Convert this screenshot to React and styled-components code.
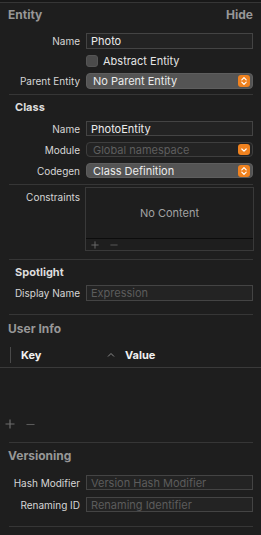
import React from "react";
import styled, { createGlobalStyle } from "styled-components";

const Global = createGlobalStyle`
  html, body { margin: 0; padding: 0; background: #1e1e1e; }
  body { font-family: Inter, "Noto Sans", "Liberation Sans", sans-serif; -webkit-font-smoothing: antialiased; }
  * { box-sizing: border-box; }
`;

const Panel = styled.div`
  width: 261px;
  height: 535px;
  background: #1e1e1e;
  display: flex;
  flex-direction: column;
  overflow: hidden;
`;

const TopBar = styled.div`
  height: 3px;
  background: #181818;
  border-bottom: 1px solid #363636;
  flex: none;
`;

const BigHeader = styled.div`
  display: flex;
  justify-content: space-between;
  align-items: center;
  height: ${(p) => p.$h || 20}px;
  margin-top: ${(p) => p.$mt || 0}px;
  padding: 0 8px;
  font-size: 12px;
  font-weight: 700;
  color: #979797;
  flex: none;
`;

const SubHeader = styled.div`
  display: flex;
  align-items: center;
  height: 16px;
  margin-top: ${(p) => p.$mt || 0}px;
  padding-left: 15px;
  font-size: 11px;
  font-weight: 700;
  color: #dddddd;
  flex: none;
`;

const Row = styled.div`
  display: flex;
  align-items: ${(p) => (p.$top ? "flex-start" : "center")};
  height: ${(p) => p.$h || 16}px;
  margin-top: ${(p) => p.$mt || 0}px;
  flex: none;
`;

const Label = styled.div`
  width: 80px;
  flex: none;
  text-align: right;
  font-size: 10px;
  color: #d6d6d6;
  white-space: nowrap;
  padding-top: ${(p) => p.$pt || 0}px;
`;

const Control = styled.div`
  margin-left: 6px;
  width: 167px;
  height: 100%;
  flex: none;
  display: flex;
  align-items: center;
`;

const Field = styled.div`
  width: 100%;
  height: 100%;
  border: 1px solid #444;
  background: #232323;
  padding-left: 4px;
  font-size: 11px;
  color: ${(p) => (p.$placeholder ? "#5c5c5c" : "#ececec")};
  display: flex;
  align-items: center;
  white-space: nowrap;
  overflow: hidden;
`;

const Popup = styled.div`
  width: 100%;
  height: 100%;
  border-radius: 4px;
  background: ${(p) => (p.$disabled ? "#232323" : "#545454")};
  border: 1px solid ${(p) => (p.$disabled ? "#3e3e3e" : "#5e5e5e")};
  padding-left: 6px;
  padding-right: 2px;
  display: flex;
  align-items: center;
  justify-content: space-between;
  font-size: 11px;
  color: ${(p) => (p.$disabled ? "#5e5e5e" : "#ececec")};
`;

const Stepper = styled.div`
  width: 12px;
  height: ${(p) => p.$h || 12}px;
  border-radius: 3px;
  background: #f0821f;
  display: flex;
  align-items: center;
  justify-content: center;
  flex: none;
`;

const CheckRow = styled.label`
  display: flex;
  align-items: center;
  gap: 5px;
  font-size: 11px;
  color: #e4e4e4;
`;

const Box = styled.div`
  width: 12px;
  height: 12px;
  border-radius: 3px;
  background: #4b4b4b;
  border: 1px solid #555;
`;

const Divider = styled.div`
  height: 1px;
  background: #363636;
  margin: ${(p) => p.$mt || 0}px 8px 0 9px;
  flex: none;
`;

const ListBox = styled.div`
  width: 169px;
  margin-left: 5px;
  height: 64px;
  border: 1px solid #393939;
  display: flex;
  flex-direction: column;
  flex: none;
`;

const ListBody = styled.div`
  flex: 1;
  display: flex;
  align-items: center;
  justify-content: center;
  font-size: 11px;
  color: #a3a3a3;
  border-bottom: 1px solid #0c0c0c;
`;

const ListFooter = styled.div`
  height: 11px;
  display: flex;
  align-items: center;
  gap: 11px;
  padding-left: 5px;
  flex: none;
`;

const TableHead = styled.div`
  height: 25px;
  margin-top: ${(p) => p.$mt || 0}px;
  border-bottom: 1px solid #3a3a3a;
  display: flex;
  align-items: center;
  padding-left: 10px;
  flex: none;
`;

const ColSep = styled.div`
  width: 1px;
  height: 16px;
  background: #4a4a4a;
  flex: none;
`;

const ColTitle = styled.div`
  font-size: 11px;
  font-weight: 700;
  color: #f0f0f0;
  width: ${(p) => p.$w || "auto"};
  padding-left: ${(p) => p.$pl || 0}px;
  flex: none;
`;

const TableBody = styled.div`
  height: 49px;
  flex: none;
`;

const TableFooter = styled.div`
  height: 14px;
  display: flex;
  align-items: center;
  gap: 11px;
  padding-left: 5px;
  flex: none;
`;

const Plus = ({ size = 8 }) => (
  <svg width={size} height={size} viewBox="0 0 10 10">
    <path d="M5 0.5V9.5M0.5 5H9.5" stroke="#6c6c6c" strokeWidth="1.2" fill="none" />
  </svg>
);

const Minus = ({ size = 8 }) => (
  <svg width={size} height={size} viewBox="0 0 10 10">
    <path d="M0.5 5H9.5" stroke="#5a5a5a" strokeWidth="1.2" fill="none" />
  </svg>
);

const UpDown = () => (
  <svg width="8" height="10" viewBox="0 0 8 10">
    <path d="M1.8 3.8L4 1.6L6.2 3.8M1.8 6.2L4 8.4L6.2 6.2" stroke="#fff" strokeWidth="1.2" fill="none" strokeLinecap="round" strokeLinejoin="round" />
  </svg>
);

const Down = () => (
  <svg width="8" height="8" viewBox="0 0 8 8">
    <path d="M1.8 3L4 5.2L6.2 3" stroke="#fff" strokeWidth="1.2" fill="none" strokeLinecap="round" strokeLinejoin="round" />
  </svg>
);

const Caret = () => (
  <svg width="8" height="6" viewBox="0 0 8 6">
    <path d="M1 4.5L4 1.5L7 4.5" stroke="#8a8a8a" strokeWidth="1" fill="none" />
  </svg>
);

const FieldRow = ({ label, mt, h, children }) => (
  <Row $mt={mt} $h={h}>
    <Label>{label}</Label>
    <Control>{children}</Control>
  </Row>
);

export default function App() {
  return (
    <>
      <Global />
      <Panel>
        <TopBar />
        <BigHeader $h={22}>
          <span>Entity</span>
          <span>Hide</span>
        </BigHeader>

        <FieldRow label="Name" mt={8}>
          <Field>Photo</Field>
        </FieldRow>
        <FieldRow label="" mt={4}>
          <CheckRow>
            <Box />
            Abstract Entity
          </CheckRow>
        </FieldRow>
        <FieldRow label="Parent Entity" mt={4}>
          <Popup>
            No Parent Entity
            <Stepper><UpDown /></Stepper>
          </Popup>
        </FieldRow>
        <Divider $mt={5} />

        <SubHeader $mt={4}>Class</SubHeader>
        <FieldRow label="Name" mt={6} h={15}>
          <Field>PhotoEntity</Field>
        </FieldRow>
        <FieldRow label="Module" mt={6} h={15}>
          <Popup $disabled>
            Global namespace
            <Stepper $h={11}><Down /></Stepper>
          </Popup>
        </FieldRow>
        <FieldRow label="Codegen" mt={6} h={15}>
          <Popup>
            Class Definition
            <Stepper><UpDown /></Stepper>
          </Popup>
        </FieldRow>
        <Divider $mt={6} />

        <Row $mt={2} $h={64} $top>
          <Label $pt={4}>Constraints</Label>
          <ListBox>
            <ListBody>No Content</ListBody>
            <ListFooter>
              <Plus />
              <Minus />
            </ListFooter>
          </ListBox>
        </Row>
        <Divider $mt={8} />

        <SubHeader $mt={4}>Spotlight</SubHeader>
        <FieldRow label="Display Name" mt={5}>
          <Field $placeholder>Expression</Field>
        </FieldRow>
        <Divider $mt={13} />

        <BigHeader $mt={3} $h={20}>
          <span>User Info</span>
        </BigHeader>
        <TableHead $mt={5}>
          <ColSep />
          <ColTitle $w="96px" $pl={10}>Key</ColTitle>
          <Caret />
          <ColTitle $pl={10}>Value</ColTitle>
        </TableHead>
        <TableBody />
        <TableFooter>
          <Plus size={10} />
          <Minus size={9} />
        </TableFooter>
        <Divider $mt={11} />

        <BigHeader $mt={2} $h={20}>
          <span>Versioning</span>
        </BigHeader>
        <FieldRow label="Hash Modifier" mt={10} h={15}>
          <Field $placeholder>Version Hash Modifier</Field>
        </FieldRow>
        <FieldRow label="Renaming ID" mt={7} h={15}>
          <Field $placeholder>Renaming Identifier</Field>
        </FieldRow>
        <Divider $mt={14} />
      </Panel>
    </>
  );
}
